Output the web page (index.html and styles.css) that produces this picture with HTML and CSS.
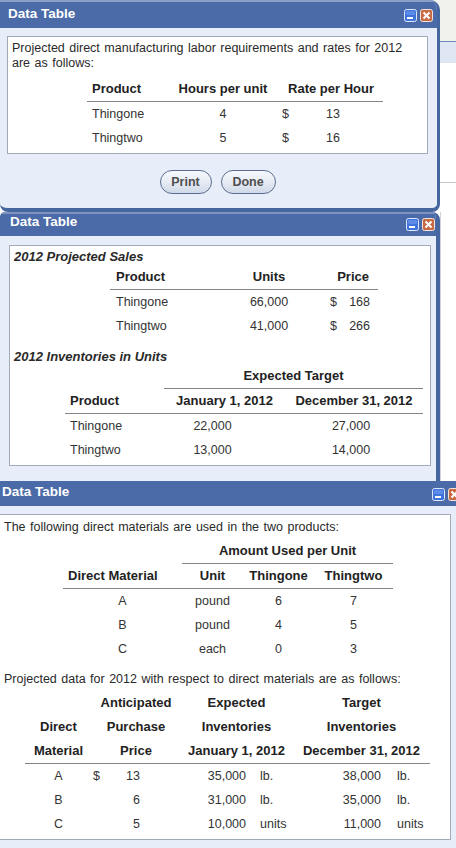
FILE: index.html
```html
<!DOCTYPE html>
<html>
<head>
<meta charset="utf-8">
<link rel="stylesheet" href="styles.css">
</head>
<body>
<div class="row row1">
  <section class="win win1">
    <div class="title">
      <span class="ttext">Data Table</span>
      <div class="icons">
        <svg class="ico" width="13" height="13" viewBox="0 0 13 13"><rect x="0.5" y="0.5" width="12" height="12" rx="2" fill="#3f74dc" stroke="#dfe8fb"/><rect x="2" y="2" width="9" height="4" rx="1" fill="#6f9cf0" opacity="0.6"/><rect x="3" y="8" width="6" height="2" fill="#fff"/></svg>
        <svg class="ico" width="13" height="13" viewBox="0 0 13 13"><rect x="0.5" y="0.5" width="12" height="12" rx="2" fill="#c76b45" stroke="#f3e3da"/><path d="M3.5 3.5 L9.5 9.5 M9.5 3.5 L3.5 9.5" stroke="#fff" stroke-width="2"/></svg>
      </div>
    </div>
    <div class="body body1">
      <div class="panel p1">
        <p class="txt">Projected direct manufacturing labor requirements and rates for 2012 are as follows:</p>
        <div class="tbl t1">
          <div class="th l5">Product</div>
          <div class="th c">Hours per unit</div>
          <div class="th c s2 ratehd">Rate per Hour</div>
          <div class="td l5">Thingone</div>
          <div class="td c">4</div>
          <div class="td d1">$</div>
          <div class="td r t1n">13</div>
          <div class="td l5">Thingtwo</div>
          <div class="td c">5</div>
          <div class="td d1">$</div>
          <div class="td r t1n">16</div>
        </div>
      </div>
      <div class="btns">
        <button class="btn bprint">Print</button>
        <button class="btn bdone">Done</button>
      </div>
    </div>
  </section>
  <div class="side side1"></div>
</div>

<div class="row row2">
  <section class="win win2">
    <div class="title">
      <span class="ttext">Data Table</span>
      <div class="icons">
        <svg class="ico" width="13" height="13" viewBox="0 0 13 13"><rect x="0.5" y="0.5" width="12" height="12" rx="2" fill="#3f74dc" stroke="#dfe8fb"/><rect x="2" y="2" width="9" height="4" rx="1" fill="#6f9cf0" opacity="0.6"/><rect x="3" y="8" width="6" height="2" fill="#fff"/></svg>
        <svg class="ico" width="13" height="13" viewBox="0 0 13 13"><rect x="0.5" y="0.5" width="12" height="12" rx="2" fill="#c76b45" stroke="#f3e3da"/><path d="M3.5 3.5 L9.5 9.5 M9.5 3.5 L3.5 9.5" stroke="#fff" stroke-width="2"/></svg>
      </div>
    </div>
    <div class="body body2">
      <div class="panel p2">
        <div class="sect s-first">2012 Projected Sales</div>
        <div class="tbl tA">
          <div class="th l6">Product</div>
          <div class="th c">Units</div>
          <div class="th s2 r pricehd">Price</div>
          <div class="td l6">Thingone</div>
          <div class="td c">66,000</div>
          <div class="td dA">$</div>
          <div class="td r nA">168</div>
          <div class="td l6">Thingtwo</div>
          <div class="td c">41,000</div>
          <div class="td dA">$</div>
          <div class="td r nA">266</div>
        </div>
        <div class="sect s-second">2012 Inventories in Units</div>
        <div class="tbl tB">
          <div class="th nb"></div>
          <div class="th c s2">Expected Target</div>
          <div class="th l5">Product</div>
          <div class="th c">January 1, 2012</div>
          <div class="th c">December 31, 2012</div>
          <div class="td l5">Thingone</div>
          <div class="td c jan">22,000</div>
          <div class="td c dec">27,000</div>
          <div class="td l5">Thingtwo</div>
          <div class="td c jan">13,000</div>
          <div class="td c dec">14,000</div>
        </div>
      </div>
    </div>
  </section>
  <div class="side side2"></div>
</div>

<section class="win win3">
  <div class="title">
    <span class="ttext">Data Table</span>
    <div class="icons">
      <svg class="ico" width="13" height="13" viewBox="0 0 13 13"><rect x="0.5" y="0.5" width="12" height="12" rx="2" fill="#3f74dc" stroke="#dfe8fb"/><rect x="2" y="2" width="9" height="4" rx="1" fill="#6f9cf0" opacity="0.6"/><rect x="3" y="8" width="6" height="2" fill="#fff"/></svg>
      <svg class="ico" width="13" height="13" viewBox="0 0 13 13"><rect x="0.5" y="0.5" width="12" height="12" rx="2" fill="#c76b45" stroke="#f3e3da"/><path d="M3.5 3.5 L9.5 9.5 M9.5 3.5 L3.5 9.5" stroke="#fff" stroke-width="2"/></svg>
    </div>
  </div>
  <div class="body body3">
    <div class="panel p3">
      <p class="txt3 first">The following direct materials are used in the two products:</p>
      <div class="tbl tC">
        <div class="th nb"></div>
        <div class="th c s3">Amount Used per Unit</div>
        <div class="th l5">Direct Material</div>
        <div class="th c">Unit</div>
        <div class="th c">Thingone</div>
        <div class="th c">Thingtwo</div>
        <div class="td c">A</div><div class="td c">pound</div><div class="td c">6</div><div class="td c">7</div>
        <div class="td c">B</div><div class="td c">pound</div><div class="td c">4</div><div class="td c">5</div>
        <div class="td c">C</div><div class="td c">each</div><div class="td c">0</div><div class="td c">3</div>
      </div>
      <p class="txt3 second">Projected data for 2012 with respect to direct materials are as follows:</p>
      <div class="tbl tD">
        <div class="th nb"></div>
        <div class="th nb c s2">Anticipated</div>
        <div class="th nb c s2">Expected</div>
        <div class="th nb c s2">Target</div>
        <div class="th nb c">Direct</div>
        <div class="th nb c s2">Purchase</div>
        <div class="th nb c s2">Inventories</div>
        <div class="th nb c s2">Inventories</div>
        <div class="th c">Material</div>
        <div class="th c s2">Price</div>
        <div class="th c s2">January 1, 2012</div>
        <div class="th c s2">December 31, 2012</div>

        <div class="td c">A</div><div class="td dD">$</div><div class="td r nD">13</div>
        <div class="td r eN">35,000</div><div class="td eU">lb.</div>
        <div class="td r tN">38,000</div><div class="td tU">lb.</div>

        <div class="td c">B</div><div class="td dD"></div><div class="td r nD">6</div>
        <div class="td r eN">31,000</div><div class="td eU">lb.</div>
        <div class="td r tN">35,000</div><div class="td tU">lb.</div>

        <div class="td c">C</div><div class="td dD"></div><div class="td r nD">5</div>
        <div class="td r eN">10,000</div><div class="td eU">units</div>
        <div class="td r tN">11,000</div><div class="td tU">units</div>
      </div>
    </div>
  </div>
</section>
</body>
</html>
```

FILE: styles.css
```css
html, body {
  margin: 0;
  padding: 0;
}
body {
  width: 456px;
  height: 848px;
  overflow: hidden;
  font-family: "Liberation Sans", Arial, sans-serif;
  font-size: 12.5px;
  word-spacing: 1px;
  color: #2a2a2a;
  background: #ffffff;
}

.row {
  display: flex;
}
.row1 {
  background: linear-gradient(to bottom, #f1f1ed 0, #f1f1ed 41px, #7089bb 41px, #7089bb 42px, #dfe7f5 42px, #dfe7f5 63px, #ffffff 63px, #ffffff 182px, #c8c8c8 182px, #c8c8c8 183px, #ffffff 183px);
}
.side {
  width: 16px;
  flex: none;
}
.side2 {
  background: #ffffff;
  border-left: 1px solid #d0d4dc;
  box-sizing: border-box;
}

.win {
  box-sizing: border-box;
  background: #e7edf9;
  overflow: hidden;
  flex: none;
}
.win1 {
  width: 440px;
  height: 212px;
  border-right: 3px solid #46669f;
  border-bottom: 4px solid #46669f;
  border-radius: 0 10px 8px 8px;
}
.win2 {
  width: 440px;
  height: 269px;
  border-right: 4px solid #46669f;
  border-radius: 5px 8px 0 0;
}
.win3 {
  width: 456px;
  height: 367px;
}

.title {
  display: flex;
  align-items: flex-start;
  background: #4a6ba7;
  color: #ffffff;
  font-weight: bold;
  font-size: 13.5px;
  word-spacing: 0;
  line-height: 16px;
  box-sizing: border-box;
  overflow: hidden;
}
.ttext {
  flex: 1;
  white-space: nowrap;
}
.icons {
  display: flex;
  gap: 3px;
  flex: none;
}
.ico {
  display: block;
}

.win1 .title {
  height: 28px;
  border-top: 2px solid #8aa0c8;
  padding: 4px 4px 0 8px;
}
.win1 .icons {
  margin-top: 3px;
}
.win2 .title {
  height: 24px;
  border-top: 2px solid #7f95c0;
  padding: 0 1px 0 10px;
}
.win2 .icons {
  margin-top: 4px;
}
.win3 .title {
  height: 25px;
  padding: 3px 0 0 2px;
}
.win3 .icons {
  margin-top: 4px;
  margin-right: -5px;
}

.panel {
  background: #ffffff;
  border: 1px solid #a3abbb;
}

.body1 {
  padding: 8px 9px 14px 7px;
}
.p1 {
  padding: 4px 4px 3px 4px;
}
.txt {
  margin: 0;
  line-height: 15px;
}

.body2 {
  padding: 9px 5px 15px 9px;
}
.p2 {
  padding: 0 0 3px 0;
}
.sect {
  font-weight: bold;
  font-style: italic;
  font-size: 13px;
  word-spacing: 0;
  line-height: 14px;
  padding-left: 4px;
  white-space: nowrap;
}
.s-first {
  margin-top: 4px;
}
.s-second {
  margin-top: 12px;
}

.body3 {
  padding: 8px 5px 0 0;
}
.p3 {
  border-left: none;
  padding: 0 0 3px 0;
}
.txt3 {
  margin: 0;
  line-height: 14px;
  padding-left: 4px;
  white-space: nowrap;
}
.txt3.first {
  margin-top: 5px;
}
.txt3.second {
  margin-top: 11px;
}

/* tables */
.tbl {
  display: grid;
  grid-auto-rows: auto;
}
.th {
  height: 25px;
  line-height: 24px;
  box-sizing: border-box;
  border-bottom: 1px solid #848484;
  font-weight: bold;
  font-size: 13px;
  word-spacing: 0;
  color: #222222;
  white-space: nowrap;
}
.th.nb {
  height: 24px;
  border-bottom: none;
}
.td {
  height: 24px;
  line-height: 24px;
  color: #333333;
  white-space: nowrap;
}
.c { text-align: center; }
.r { text-align: right; }
.l5 { padding-left: 5px; }
.l6 { padding-left: 6px; }
.s2 { grid-column: span 2; }
.s3 { grid-column: span 3; }

.t1 {
  margin: 6px 0 0 75px;
  grid-template-columns: 86px 100px 27px 83px;
  width: 296px;
}
.ratehd { padding-left: 6px; }
.d1 { padding-left: 9px; }
.t1n { padding-right: 43px; }

.tA {
  margin: 1px 0 0 100px;
  grid-template-columns: 110px 98px 18px 42px;
  width: 268px;
}
.pricehd { padding-right: 9px; }
.dA { padding-left: 12px; }
.nA { padding-right: 8px; }

.tB {
  margin: 0 0 0 55px;
  grid-template-columns: 99px 121px 138px;
  width: 358px;
}
.jan { padding-right: 24px; }
.dec { padding-right: 6px; }

.tC {
  margin: 5px 0 0 63px;
  grid-template-columns: 119px 61px 71px 79px;
  width: 330px;
}

.tD {
  margin: 5px 0 0 25px;
  grid-template-columns: 67px 18px 70px 70px 43px 92px 45px;
  width: 405px;
}
.dD { padding-left: 1px; }
.nD { padding-right: 40px; }
.eN { padding-right: 4px; }
.eU { padding-left: 10px; }
.tN { padding-right: 4px; }
.tU { padding-left: 12px; }

/* buttons */
.btns {
  display: flex;
  justify-content: center;
  gap: 9px;
  margin-top: 16px;
}
.btn {
  height: 24px;
  box-sizing: border-box;
  border: 1px solid #5b6d8f;
  border-radius: 12px;
  background: linear-gradient(to bottom, #f7f9fd 0%, #e6ebf4 50%, #d0d9e8 100%);
  font-family: "Liberation Sans", Arial, sans-serif;
  font-weight: bold;
  font-size: 12.5px;
  color: #4e4e4e;
  padding: 0;
  margin: 0;
}
.bprint { width: 52px; }
.bdone { width: 55px; }
```
